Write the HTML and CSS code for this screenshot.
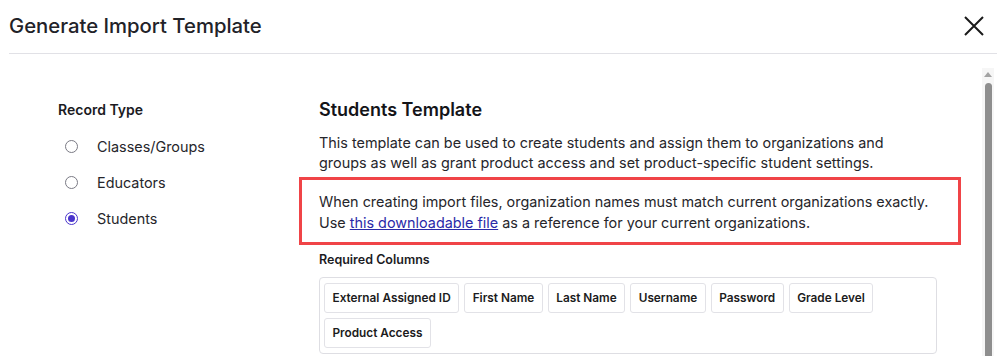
FILE: index.html
```html
<!DOCTYPE html>
<html lang="en">

<head>
    <meta charset="UTF-8">
    <meta name="viewport" content="width=device-width, initial-scale=1.0">
    <title>Generate Import Template</title>
    <link rel="stylesheet" href="styles.css">
</head>

<body>
    <div id="header">
        <h1 class="title">Generate Import Template</h1>
        <button type="button" class="close" aria-label="Close">
            <svg width="20" height="20" viewBox="0 0 20 20">
                <path d="M1 1 L19 19 M19 1 L1 19" stroke="#1a1a1a" stroke-width="2" fill="none" />
            </svg>
        </button>
    </div>

    <div id="main">
        <div id="content">
            <div class="side">
                <div class="sideTitle">Record Type</div>
                <label class="opt"><span class="radio"></span>Classes/Groups</label>
                <label class="opt"><span class="radio"></span>Educators</label>
                <label class="opt"><span class="radio on"></span>Students</label>
            </div>

            <div class="detail">
                <h2 class="detailTitle">Students Template</h2>
                <p class="desc">This template can be used to create students and assign them to organizations and
                    groups as well as grant product access and set product-specific student settings.</p>

                <div class="note">
                    When creating import files, organization names must match current organizations exactly.<br>
                    Use <a href="#">this downloadable file</a> as a reference for your current organizations.
                </div>

                <div class="reqTitle">Required Columns</div>
                <div class="chips">
                    <span class="chip">External Assigned ID</span>
                    <span class="chip">First Name</span>
                    <span class="chip">Last Name</span>
                    <span class="chip">Username</span>
                    <span class="chip">Password</span>
                    <span class="chip">Grade Level</span>
                    <span class="chip">Product Access</span>
                </div>
            </div>
        </div>

        <div class="scroll">
            <div class="arrow"></div>
            <div class="thumb"></div>
        </div>
    </div>
</body>

</html>
```

FILE: styles.css
```css
body {
    margin: 0;
    font-family: Inter, "Liberation Sans", sans-serif;
    color: #1f1f24;
    background: #fff;
    overflow: hidden;
}

#header {
    margin: 0 9px;
    height: 53px;
    border-bottom: 1px solid #e1e1e6;
    display: flex;
    justify-content: space-between;
    align-items: flex-start;
}

.title {
    margin: 0;
    padding-top: 15px;
    font-size: 20.3px;
    line-height: 22px;
    font-weight: 500;
    color: #222228;
}

.close {
    margin: 16px 13px 0 0;
    padding: 0;
    border: 0;
    background: none;
    width: 20px;
    height: 20px;
}

#main {
    display: flex;
    height: 302px;
}

#content {
    flex: 1;
    display: flex;
    padding-top: 46px;
}

.side {
    width: 261px;
    padding-left: 58px;
}

.sideTitle {
    margin-top: 1px;
    font-size: 14px;
    font-weight: 600;
    line-height: 18px;
    color: #1b1b1f;
    margin-bottom: 16px;
}

.opt {
    display: flex;
    align-items: center;
    height: 36px;
    font-size: 14.4px;
    color: #26262b;
    margin-top: -7px;
    margin-bottom: 7px;
}

.radio {
    width: 11px;
    height: 11px;
    border: 1.5px solid #7a7a84;
    border-radius: 50%;
    margin-left: 7px;
    margin-right: 19px;
    position: relative;
}

.radio.on {
    border-color: #4a35cc;
}

.radio.on::after {
    content: "";
    position: absolute;
    left: 2px;
    top: 2px;
    width: 7px;
    height: 7px;
    border-radius: 50%;
    background: #4a35cc;
}

.detail {
    width: 620px;
}

.detailTitle {
    margin: 0;
    font-size: 18px;
    font-weight: 600;
    line-height: 20px;
    color: #141418;
}

.desc {
    margin: 13px 0 0;
    max-width: 570px;
    font-size: 14.4px;
    line-height: 20px;
    color: #26262b;
}

.note {
    margin: 4px 0 0 -20px;
    width: 622px;
    border: 3px solid #f04447;
    padding: 11px 17px 9px 17px;
    font-size: 14.4px;
    line-height: 21px;
    color: #26262b;
}

.note a {
    color: #2a2aa8;
}

.reqTitle {
    margin-top: 7px;
    font-size: 12.5px;
    font-weight: 600;
    line-height: 16px;
    color: #1b1b1f;
}

.chips {
    margin-top: 9px;
    width: 608px;
    border: 1px solid #dedee3;
    border-radius: 4px;
    padding: 5px 4px;
    display: flex;
    flex-wrap: wrap;
    gap: 5px 5px;
}

.chip {
    height: 28px;
    line-height: 28px;
    padding: 0 7.5px;
    border: 1px solid #e2e2e7;
    border-radius: 3px;
    font-size: 11.8px;
    font-weight: 600;
    color: #1b1b20;
}

.scroll {
    width: 12px;
    margin: 14px 12px 0 0;
    background: #f6f6f6;
    display: flex;
    flex-direction: column;
    align-items: center;
}

.arrow {
    margin-top: 4px;
    width: 0;
    height: 0;
    border-left: 4px solid transparent;
    border-right: 4px solid transparent;
    border-bottom: 5px solid #a3a3a3;
}

.thumb {
    margin-top: 6px;
    width: 7px;
    flex: 1;
    background: #8e8e8e;
    border-radius: 4px 4px 0 0;
}
```
